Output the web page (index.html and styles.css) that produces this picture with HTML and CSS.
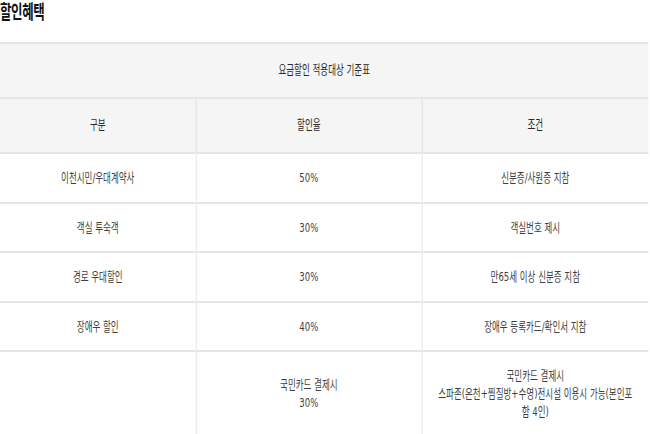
FILE: index.html
```html
<!DOCTYPE html>
<html lang="ko">
<head>
<meta charset="utf-8">
<title>할인혜택</title>
<link rel="stylesheet" href="styles.css">
</head>
<body>
<div class="frame">
<div class="page">
  <h2 class="title">할인혜택</h2>
  <table class="rates">
    <colgroup>
      <col class="c1"><col class="c2"><col class="c3">
    </colgroup>
    <thead>
      <tr><th colspan="3" class="caption-cell">요금할인 적용대상 기준표</th></tr>
      <tr><th>구분</th><th>할인율</th><th>조건</th></tr>
    </thead>
    <tbody>
      <tr><td>이천시민/우대계약사</td><td>50%</td><td>신분증/사원증 지참</td></tr>
      <tr><td>객실 투숙객</td><td>30%</td><td>객실번호 제시</td></tr>
      <tr><td>경로 우대할인</td><td>30%</td><td>만65세 이상 신분증 지참</td></tr>
      <tr><td>장애우 할인</td><td>40%</td><td>장애우 등록카드/확인서 지참</td></tr>
      <tr class="tall"><td></td><td>국민카드 결제시<br>30%</td><td>국민카드 결제시<br>스파존(온천+찜질방+수영)전시설 이용시 가능(본인포<br>함 4인)</td></tr>
    </tbody>
  </table>
</div>
</div>
</body>
</html>
```

FILE: styles.css
```css
html, body {
  margin: 0;
  padding: 0;
  background: #ffffff;
  overflow: hidden;
}

.frame {
  width: 650px;
  height: 434px;
  overflow: hidden;
  contain: paint;
}

.page {
  width: 990px;
  transform: scaleX(0.655);
  transform-origin: 0 0;
  font-family: "DejaVu Sans", "Noto Sans CJK KR", sans-serif;
}

.title {
  margin: 0 0 18px 0;
  padding: 0;
  font-size: 19px;
  line-height: 24px;
  font-weight: bold;
  letter-spacing: -0.5px;
  color: #111111;
}

.rates {
  width: 990px;
  border-collapse: collapse;
  table-layout: fixed;
  font-size: 13px;
  line-height: 18px;
}

.c1 { width: 299px; }
.c2 { width: 345px; }
.c3 { width: 346px; }

.rates th,
.rates td {
  text-align: center;
  vertical-align: middle;
  border-top: 2px solid #e6e6e6;
  border-bottom: 2px solid #e6e6e6;
  border-left: 1px solid #d8d8d8;
  border-right: 1px solid #d8d8d8;
  padding: 15px 6px 14.5px;
}

.rates th:first-child,
.rates td:first-child {
  border-left: none;
}

.rates th:last-child,
.rates td:last-child {
  border-right: none;
}

.rates th {
  background: #f5f5f5;
  color: #2a2a2a;
  font-weight: normal;
  padding: 17px 6px 18px;
}

.rates td {
  color: #3f3f3f;
}

.rates .tall td {
  padding: 15px 6px 16px;
}
```
